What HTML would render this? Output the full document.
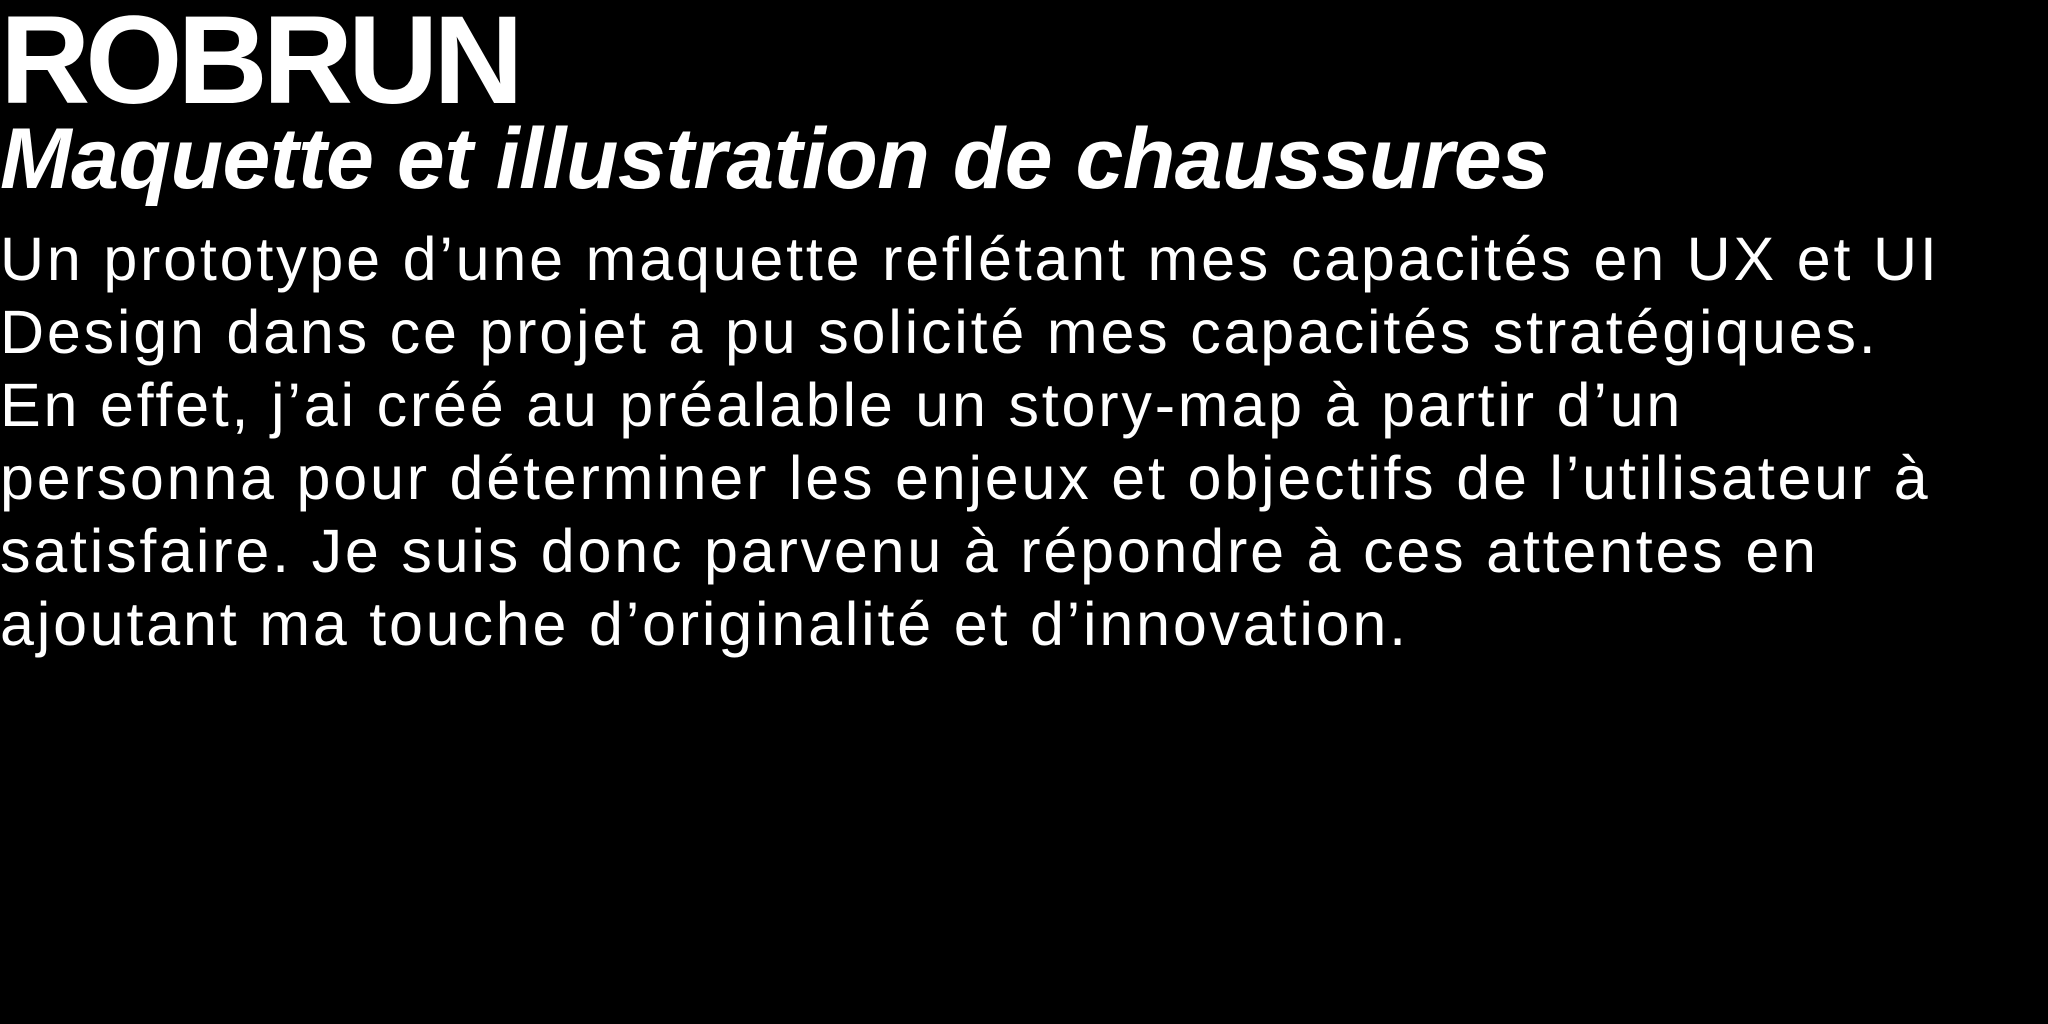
<!DOCTYPE html>
<html><head><meta charset="utf-8"><style>
html,body{margin:0;padding:0;background:#000;width:2048px;height:1024px;overflow:hidden}
body{font-family:"Liberation Sans",sans-serif;color:#fff}
.t{position:absolute;left:0;white-space:nowrap}
#h{top:-2px;font-size:125px;line-height:125px;font-weight:bold;letter-spacing:-5px}
#s{top:116px;font-size:86px;line-height:86px;font-weight:bold;font-style:italic;letter-spacing:-0.5px}
#b{top:223px;font-size:61px;line-height:73px;letter-spacing:2.8px}
</style></head><body>
<div class="t" id="h">ROBRUN</div>
<div class="t" id="s">Maquette et illustration de chaussures</div>
<div class="t" id="b">Un prototype d’une maquette reflétant mes capacités en UX et UI<br>Design dans ce projet a pu solicité mes capacités stratégiques.<br>En effet, j’ai créé au préalable un story-map à partir d’un<br>personna pour déterminer les enjeux et objectifs de l’utilisateur à<br>satisfaire. Je suis donc parvenu à répondre à ces attentes en<br>ajoutant ma touche d’originalité et d’innovation.</div>
</body></html>
